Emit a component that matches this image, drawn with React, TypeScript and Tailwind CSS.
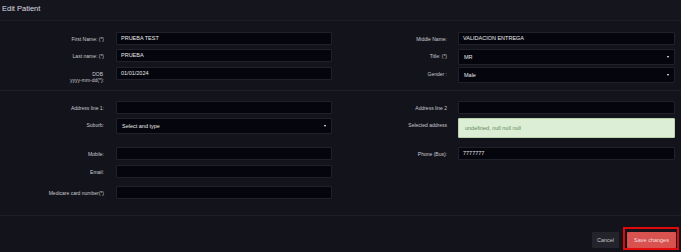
import React from "react";

const font = { fontFamily: '"Liberation Sans", Arial, sans-serif' };

function Label({ children, w = "w-[108px]" }: { children: React.ReactNode; w?: string }) {
  return (
    <div className={`${w} shrink-0 pr-[4px] pt-[4px] text-right text-[5px] leading-[6px] text-[#c9c9cf]`}>
      {children}
    </div>
  );
}

function Input({ value = "", h = "h-[13px]" }: { value?: string; h?: string }) {
  return (
    <div
      className={`${h} flex-1 flex items-center rounded-[1px] border border-[#202129] bg-[#05060d] pl-[4px] text-[5.5px] text-[#e6e6ea]`}
    >
      {value}
    </div>
  );
}

function Select({ value }: { value: string }) {
  return (
    <div className="h-[16px] flex-1 flex items-center justify-between rounded-[1px] border border-[#202129] bg-[#05060d] pl-[5px] pr-[5px] text-[5.5px] text-[#e6e6ea]">
      <span>{value}</span>
      <span className="block h-0 w-0 border-l-[1.5px] border-r-[1.5px] border-t-[2px] border-l-transparent border-r-transparent border-t-white" />
    </div>
  );
}

function Left({ label, children }: { label: React.ReactNode; children?: React.ReactNode }) {
  return (
    <div className="flex w-[340px] items-start">
      <Label>{label}</Label>
      <div className="ml-[8px] mr-[8px] flex flex-1">{children}</div>
    </div>
  );
}

function Right({ label, children }: { label: React.ReactNode; children?: React.ReactNode }) {
  return (
    <div className="flex w-[341px] items-start">
      <Label w="w-[111px]">{label}</Label>
      <div className="ml-[7px] mr-[6px] flex flex-1">{children}</div>
    </div>
  );
}

export default function App() {
  return (
    <div style={font} className="h-[252px] w-[681px] overflow-hidden bg-[#13141b]">
      <div className="flex h-[21px] items-center border-b border-[#1d1e26] bg-[#15161d] pl-[2px] pb-[2px]">
        <span className="text-[7.5px] font-medium text-[#dcdce0]">Edit Patient</span>
      </div>

      <div className="border-b border-[#1d1e26] pt-[11px] pb-[7px]">
        <div className="flex h-[17px]">
          <Left label="First Name: (*)">
            <Input value="PRUEBA TEST" />
          </Left>
          <Right label="Middle Name:">
            <Input value="VALIDACION ENTREGA" />
          </Right>
        </div>
        <div className="flex h-[18px]">
          <Left label="Last name: (*)">
            <Input value="PRUEBA" />
          </Left>
          <Right label="Title: (*)">
            <Select value="MR" />
          </Right>
        </div>
        <div className="flex h-[16px]">
          <Left
            label={
              <>
                <span className="block pr-[1px]">DOB</span>
                <span className="block">yyyy-mm-dd(*):</span>
              </>
            }
          >
            <Input value="01/01/2024" />
          </Left>
          <Right label="Gender :">
            <Select value="Male" />
          </Right>
        </div>
      </div>

      <div className="border-b border-[#1d1e26] pt-[10px] pb-[16px]">
        <div className="flex h-[17px]">
          <Left label="Address line 1:">
            <Input />
          </Left>
          <Right label="Address line 2">
            <Input />
          </Right>
        </div>
        <div className="flex h-[29px]">
          <Left label="Suburb:">
            <Select value="Select and type" />
          </Left>
          <Right label="Selected address">
            <div className="flex h-[20px] flex-1 items-center rounded-[1px] border border-[#b9d3ad] bg-[#dcefd6] pl-[6px] text-[5.5px] text-[#62865a]">
              undefined, null null null
            </div>
          </Right>
        </div>
        <div className="flex h-[18px]">
          <Left label="Mobile:">
            <Input />
          </Left>
          <Right label="Phone (Bus):">
            <Input value="7777777" />
          </Right>
        </div>
        <div className="flex h-[21px]">
          <Left label="Email:">
            <Input />
          </Left>
        </div>
        <div className="flex h-[13px]">
          <Left label="Medicare card number(*)">
            <Input />
          </Left>
        </div>
      </div>

      <div className="flex items-start justify-end pt-[11px] pr-[2px]">
        <button className="mt-[5px] h-[16px] w-[27px] rounded-[1px] bg-[#22232b] text-[5.5px] text-[#c4c4c8]">
          Cancel
        </button>
        <div className="ml-[4px] border-2 border-[#e00a0a] pt-[3px] pl-[2px] pr-[1px] pb-0">
          <button className="block h-[16px] w-[49px] rounded-[1px] bg-[#d85350] text-[5.5px] text-[#f6dede]">
            Save changes
          </button>
        </div>
      </div>
    </div>
  );
}
